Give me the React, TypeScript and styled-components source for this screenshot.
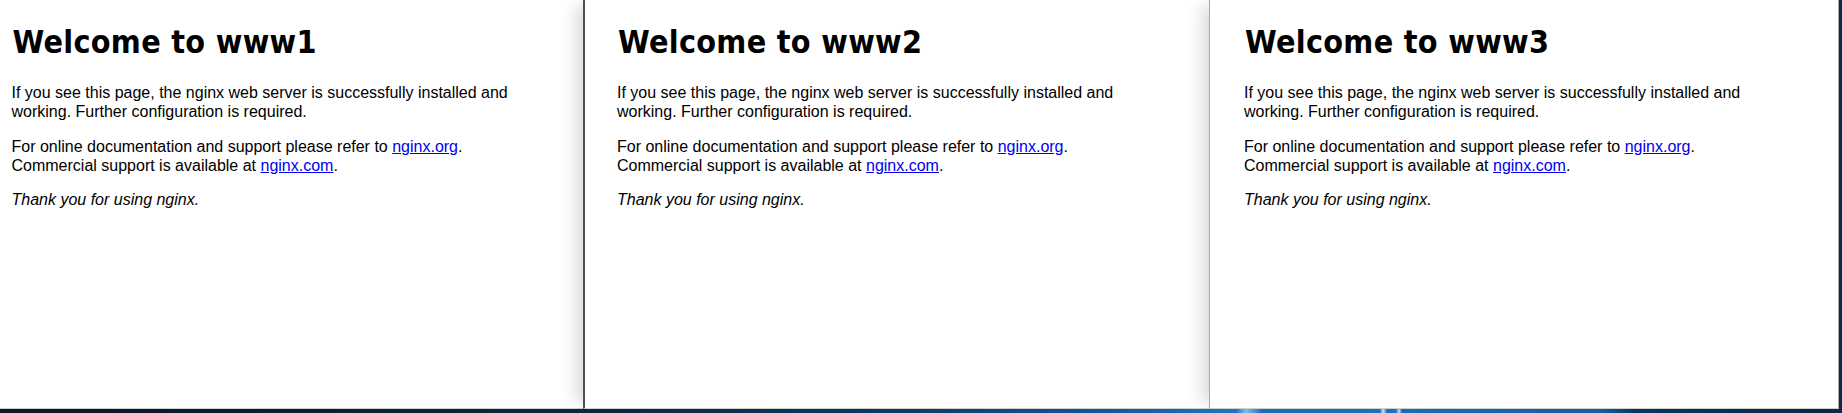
import React from "react";
import styled, { createGlobalStyle } from "styled-components";

const GlobalStyle = createGlobalStyle`
  html, body {
    margin: 0;
    padding: 0;
    background: #0b2748;
  }
  #root {
    width: 1842px;
    height: 413px;
    overflow: hidden;
  }
`;

/* Desktop holding three browser windows tiled side by side */
const Desktop = styled.div`
  width: 1842px;
  height: 413px;
  display: flex;
  flex-direction: column;
  background: #0c2a4c;
`;

const WindowRow = styled.div`
  display: flex;
  flex-direction: row;
  height: 409px;
`;

/* Wallpaper sliver visible under the windows */
const WallpaperStrip = styled.div`
  height: 4px;
  background: linear-gradient(
    90deg,
    #0a1624 0px,
    #0c1d31 300px,
    #0e2740 600px,
    #113a66 900px,
    #1558a0 1100px,
    #1e78c8 1236px,
    #7ec4ee 1246px,
    #1a70c0 1262px,
    #1c74c4 1380px,
    #d8ecf8 1383px,
    #1c74c4 1387px,
    #1c74c4 1396px,
    #cfe6f6 1399px,
    #1a70c0 1402px,
    #1560a8 1600px,
    #0e3560 1636px,
    #0b2748 1842px
  );
`;

type EdgeKind = "none" | "dark" | "light";

const leftEdge: Record<EdgeKind, string> = {
  none: "none",
  dark: "2px solid #46525e",
  light: "1px solid #a9a9a9",
};

const BrowserWindow = styled.section<{
  $width: number;
  $edge: EdgeKind;
  $rightEdge?: boolean;
  $layer: number;
  $shadow?: boolean;
}>`
  position: relative;
  z-index: ${(p) => p.$layer};
  box-sizing: content-box;
  width: ${(p) => p.$width}px;
  height: 408px;
  flex: none;
  background: #ffffff;
  border-left: ${(p) => leftEdge[p.$edge]};
  border-right: ${(p) => (p.$rightEdge ? "1px solid #a9a9a9" : "none")};
  border-bottom: 1px solid #cfcfcf;
  box-shadow: ${(p) =>
    p.$shadow ? "-12px 0 16px -6px rgba(0, 0, 0, 0.16)" : "none"};
  overflow: hidden;
  display: flow-root;
`;

/* The stock nginx welcome page: a 35em column centred in the viewport */
const PageBody = styled.div`
  width: 35em;
  margin: 0 auto;
  font-family: "Liberation Sans", Arial, sans-serif;
  font-size: 16px;
  color: #000000;
`;

const Heading = styled.h1`
  font-family: "DejaVu Sans Condensed", "DejaVu Sans", sans-serif;
  font-weight: bold;
  font-size: 32px;
  line-height: 38.6px;
  letter-spacing: 0.3px;
  margin: 23px 0 21.7px;
  padding-left: 1px;
`;

const Para = styled.p`
  margin: 15.5px 0;
  line-height: 19px;
`;

const Link = styled.a`
  color: #0000ee;
  text-decoration: underline;
`;

const Thanks = styled.em`
  font-style: italic;
`;

function WelcomePage({ host }: { host: string }) {
  return (
    <PageBody>
      <Heading>Welcome to {host}</Heading>
      <Para>
        If you see this page, the nginx web server is successfully installed and
        working. Further configuration is required.
      </Para>
      <Para>
        For online documentation and support please refer to{" "}
        <Link href="http://nginx.org/">nginx.org</Link>.<br />
        Commercial support is available at{" "}
        <Link href="http://nginx.com/">nginx.com</Link>.
      </Para>
      <Para>
        <Thanks>Thank you for using nginx.</Thanks>
      </Para>
    </PageBody>
  );
}

export default function App() {
  return (
    <>
      <GlobalStyle />
      <Desktop>
        <WindowRow>
          <BrowserWindow $width={583} $edge="none" $layer={1}>
            <WelcomePage host="www1" />
          </BrowserWindow>
          <BrowserWindow $width={624} $edge="dark" $layer={2} $shadow>
            <WelcomePage host="www2" />
          </BrowserWindow>
          <BrowserWindow $width={628} $edge="light" $rightEdge $layer={3} $shadow>
            <WelcomePage host="www3" />
          </BrowserWindow>
        </WindowRow>
        <WallpaperStrip />
      </Desktop>
    </>
  );
}
